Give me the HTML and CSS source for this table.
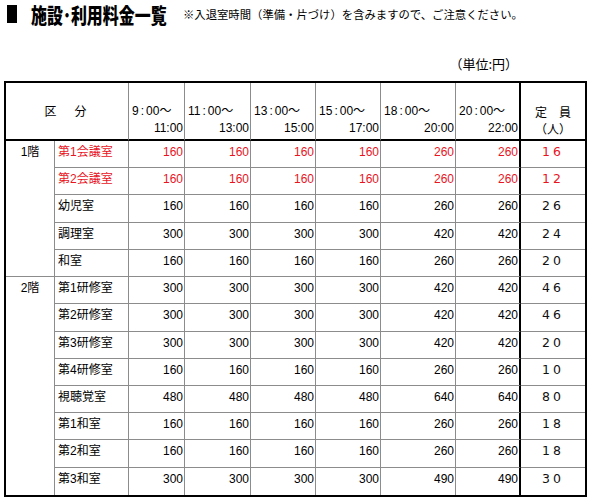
FILE: index.html
```html
<!DOCTYPE html>
<html lang="ja">
<head>
<meta charset="utf-8">
<title>施設・利用料金一覧</title>
<link rel="stylesheet" href="styles.css">
</head>
<body>
<div class="page">
  <header class="head">
    <h1 class="title"><span class="sq"></span><span class="ttl">施設･利用料金一覧</span></h1>
    <p class="note">※入退室時間（準備・片づけ）を含みますので、ご注意ください。</p>
  </header>
  <p class="unit">（単位:円）</p>
  <table class="fees">
    <colgroup>
      <col class="w1"><col class="w2"><col class="w3"><col class="w4"><col class="w5"><col class="w6"><col class="w7"><col class="w8"><col class="w9">
    </colgroup>
    <thead>
      <tr>
        <th colspan="2" class="kubun">区　分</th>
        <th class="time"><div class="from">9<span class="cl">:</span>00～</div><div class="to">11:00</div></th>
        <th class="time"><div class="from">11<span class="cl">:</span>00～</div><div class="to">13:00</div></th>
        <th class="time"><div class="from">13<span class="cl">:</span>00～</div><div class="to">15:00</div></th>
        <th class="time"><div class="from">15<span class="cl">:</span>00～</div><div class="to">17:00</div></th>
        <th class="time"><div class="from">18<span class="cl">:</span>00～</div><div class="to">20:00</div></th>
        <th class="time thick"><div class="from">20<span class="cl">:</span>00～</div><div class="to">22:00</div></th>
        <th class="cap"><div>定　員</div><div>（人）</div></th>
      </tr>
    </thead>
    <tbody>
      <tr class="red">
        <td rowspan="5" class="floor">1階</td>
        <td class="room">第1会議室</td><td>160</td><td>160</td><td>160</td><td>160</td><td>260</td><td class="thick">260</td><td class="num">16</td>
      </tr>
      <tr class="red">
        <td class="room">第2会議室</td><td>160</td><td>160</td><td>160</td><td>160</td><td>260</td><td class="thick">260</td><td class="num">12</td>
      </tr>
      <tr>
        <td class="room">幼児室</td><td>160</td><td>160</td><td>160</td><td>160</td><td>260</td><td class="thick">260</td><td class="num">26</td>
      </tr>
      <tr>
        <td class="room">調理室</td><td>300</td><td>300</td><td>300</td><td>300</td><td>420</td><td class="thick">420</td><td class="num">24</td>
      </tr>
      <tr>
        <td class="room">和室</td><td>160</td><td>160</td><td>160</td><td>160</td><td>260</td><td class="thick">260</td><td class="num">20</td>
      </tr>
      <tr>
        <td rowspan="8" class="floor last">2階</td>
        <td class="room">第1研修室</td><td>300</td><td>300</td><td>300</td><td>300</td><td>420</td><td class="thick">420</td><td class="num">46</td>
      </tr>
      <tr>
        <td class="room">第2研修室</td><td>300</td><td>300</td><td>300</td><td>300</td><td>420</td><td class="thick">420</td><td class="num">46</td>
      </tr>
      <tr>
        <td class="room">第3研修室</td><td>300</td><td>300</td><td>300</td><td>300</td><td>420</td><td class="thick">420</td><td class="num">20</td>
      </tr>
      <tr>
        <td class="room">第4研修室</td><td>160</td><td>160</td><td>160</td><td>160</td><td>260</td><td class="thick">260</td><td class="num">10</td>
      </tr>
      <tr>
        <td class="room">視聴覚室</td><td>480</td><td>480</td><td>480</td><td>480</td><td>640</td><td class="thick">640</td><td class="num">80</td>
      </tr>
      <tr>
        <td class="room">第1和室</td><td>160</td><td>160</td><td>160</td><td>160</td><td>260</td><td class="thick">260</td><td class="num">18</td>
      </tr>
      <tr>
        <td class="room">第2和室</td><td>160</td><td>160</td><td>160</td><td>160</td><td>260</td><td class="thick">260</td><td class="num">18</td>
      </tr>
      <tr>
        <td class="room">第3和室</td><td>300</td><td>300</td><td>300</td><td>300</td><td>490</td><td class="thick">490</td><td class="num">30</td>
      </tr>
    </tbody>
  </table>
</div>
</body>
</html>
```

FILE: styles.css
```css
html, body {
  margin: 0;
  padding: 0;
  background: #fff;
}

body {
  font-family: "Liberation Sans", "Noto Sans CJK JP", sans-serif;
  color: #000;
  width: 600px;
}

.head {
  display: flex;
  align-items: center;
  height: 28px;
}

.title {
  margin: 0;
  width: 176px;
  padding-left: 7px;
  display: flex;
  align-items: center;
  height: 28px;
  font-size: 21px;
  line-height: 28px;
}

.sq {
  flex: none;
  width: 10px;
  height: 18px;
  background: #000;
  margin-right: 14px;
}

.ttl {
  display: inline-block;
  white-space: nowrap;
  font-family: "Noto Sans CJK JP", sans-serif;
  font-weight: 900;
  transform: scaleX(0.76);
  transform-origin: left center;
}

.note {
  margin: 0;
  font-family: "Noto Sans CJK JP", sans-serif;
  font-size: 11.35px;
  line-height: 16px;
  white-space: nowrap;
}

.unit {
  margin: 28px 0 9px;
  padding-right: 82px;
  text-align: right;
  font-family: "Noto Sans CJK JP", sans-serif;
  font-size: 13px;
  line-height: 16px;
}

.fees {
  margin-left: 4px;
  width: 583px;
  table-layout: fixed;
  border-collapse: separate;
  border-spacing: 0;
  border: 2px solid #000;
  font-size: 12px;
  line-height: 14px;
}

.w1 { width: 49px; }
.w2 { width: 74px; }
.w3 { width: 56px; }
.w4 { width: 66px; }
.w5 { width: 65px; }
.w6 { width: 65px; }
.w7 { width: 75px; }
.w8 { width: 65px; }
.w9 { width: 64px; }

.fees th,
.fees td {
  padding: 0;
  border-right: 1px solid #8c8c8c;
  border-bottom: 1px solid #8c8c8c;
  font-weight: normal;
  box-sizing: border-box;
}

.fees tr > :last-child {
  border-right: none;
}

.fees .thick {
  border-right: 2px solid #000;
}

.fees thead th {
  height: 58px;
  border-bottom: 2px solid #000;
}

.kubun {
  text-align: center;
  vertical-align: middle;
  letter-spacing: 3px;
  padding-left: 3px;
  font-family: "Noto Sans CJK JP", sans-serif;
}

.time {
  vertical-align: bottom;
  line-height: 17px;
  padding-bottom: 2px !important;
}

.time .from {
  text-align: left;
  padding-left: 3px;
}

.time .to {
  text-align: right;
  padding-right: 1px;
}

.cl {
  margin: 0 2px;
}

.cap {
  vertical-align: bottom;
  text-align: center;
  line-height: 17px;
  padding-bottom: 2px !important;
  font-family: "Noto Sans CJK JP", sans-serif;
}

.fees tbody td {
  height: 27.23px;
  vertical-align: top;
  padding-top: 4px;
  text-align: right;
  padding-right: 1px;
}

.fees tbody tr:last-child td,
.fees tbody td.last {
  border-bottom: none;
}

.fees tbody td.floor {
  text-align: center;
  padding-right: 0;
}

.fees tbody td.room {
  text-align: left;
  padding-left: 3px;
}

.fees tbody td.num {
  text-align: center;
  padding-right: 0;
  padding-left: 0;
  font-family: "DejaVu Sans", sans-serif;
  font-size: 12.5px;
  letter-spacing: 3px;
  color: #111;
}

.fees tbody .red td,
.fees tbody .red td.num {
  color: #e8141e;
}

.fees tbody .red td.floor {
  color: #000;
}
```
